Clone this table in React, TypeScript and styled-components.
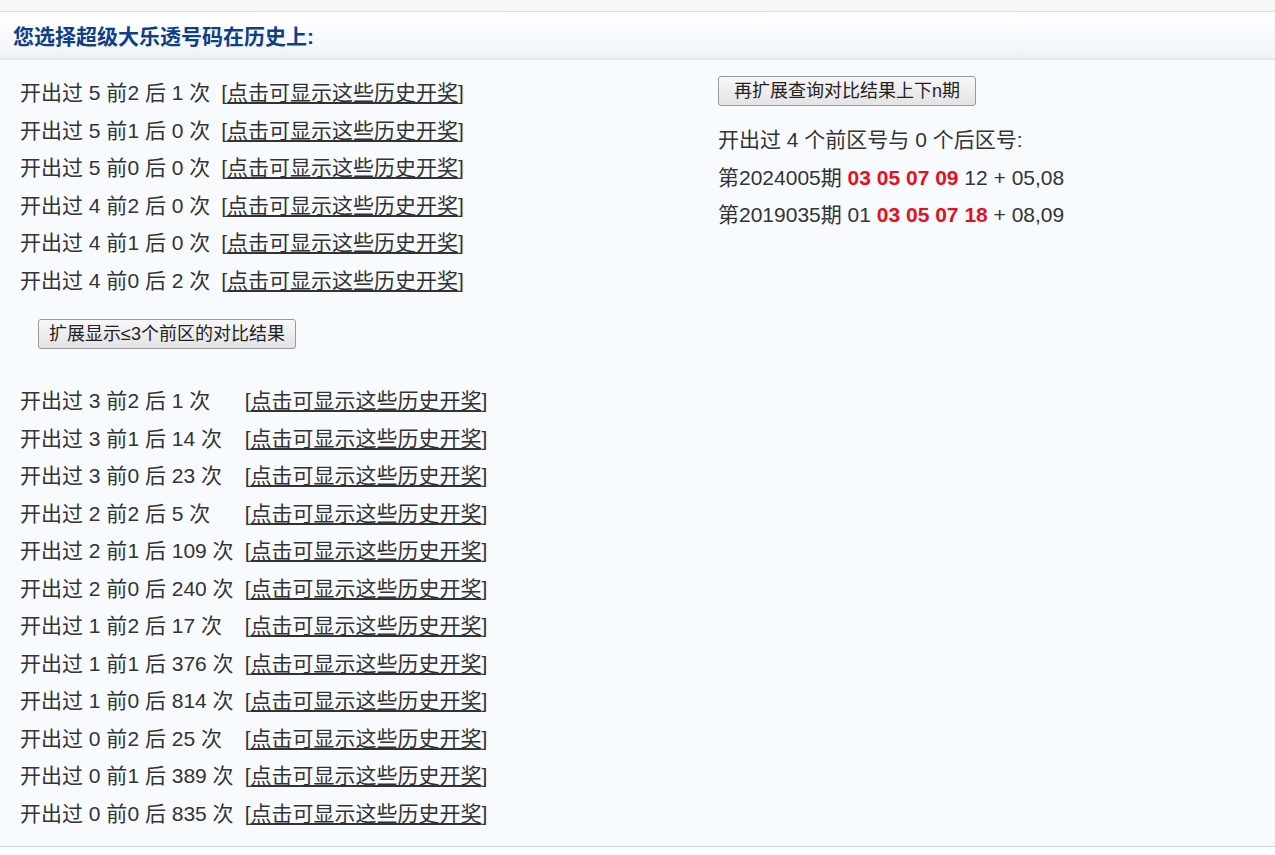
import React from "react";
import styled, { createGlobalStyle } from "styled-components";

const Global = createGlobalStyle`
  html, body { margin: 0; padding: 0; background: #ffffff; }
  body { font-family: "Liberation Sans", "Noto Sans CJK SC", sans-serif; color: #333; }
`;

const Page = styled.div`
  width: 1275px;
  height: 855px;
  display: flex;
  flex-direction: column;
  background: #ffffff;
`;

const TopStrip = styled.div`
  height: 11px;
  background: #f6f7f6;
  border-bottom: 1px solid #dcdedf;
`;

const Header = styled.div`
  height: 46px;
  display: flex;
  align-items: center;
  padding-left: 13px;
  background: linear-gradient(#ffffff 0%, #f5f8fd 70%, #eef2f7 100%);
  border-bottom: 2px solid #e3e8ee;
`;

const Title = styled.h2`
  margin: 0;
  font-size: 21px;
  font-weight: bold;
  color: #0e3f88;
  font-family: "Liberation Sans", "Noto Sans CJK SC", sans-serif;
`;

const Content = styled.div`
  height: 786px;
  background: #f8fbfe;
  border-bottom: 1px solid #c9d9e2;
  display: grid;
  grid-template-columns: 718px 1fr;
`;

const LeftCol = styled.div`
  padding: 14px 0 0 20px;
  display: flex;
  flex-direction: column;
  align-items: flex-start;
`;

const RightCol = styled.div`
  padding-top: 16px;
  display: flex;
  flex-direction: column;
  align-items: flex-start;
`;

const Table = styled.table`
  border-collapse: collapse;
  font-size: 21px;
  color: #333;
`;

const Cell = styled.td`
  padding: 0 11px 0 0;
  height: 37.5px;
  line-height: 37.5px;
  white-space: nowrap;
`;

const LinkWrap = styled.span`
  color: #333;
`;

const Link = styled.a`
  color: #333;
  text-decoration: underline;
  text-underline-offset: 2px;
  cursor: pointer;
`;

const Button = styled.button<{ $ml?: number; $px: number }>`
  margin-left: ${(p) => p.$ml ?? 0}px;
  height: 30px;
  padding: 0 ${(p) => p.$px}px;
  font-size: 18px;
  font-family: "Liberation Sans", "Noto Sans CJK SC", sans-serif;
  color: #222;
  background: linear-gradient(#f8f8f8, #e3e3e3);
  border: 1px solid #9a9a9a;
  border-radius: 3px;
  line-height: 28px;
`;

const ButtonRow = styled.div`
  padding: 20px 0 33px 0;
  display: flex;
`;

const Line = styled.div`
  font-size: 21px;
  line-height: 37.5px;
  color: #333;
  white-space: nowrap;
`;

const Red = styled.b`
  color: #e8101a;
`;

const Spacer = styled.div`
  height: 15px;
`;

const group1 = [
  ["5", "2", "1"],
  ["5", "1", "0"],
  ["5", "0", "0"],
  ["4", "2", "0"],
  ["4", "1", "0"],
  ["4", "0", "2"],
];

const group2 = [
  ["3", "2", "1"],
  ["3", "1", "14"],
  ["3", "0", "23"],
  ["2", "2", "5"],
  ["2", "1", "109"],
  ["2", "0", "240"],
  ["1", "2", "17"],
  ["1", "1", "376"],
  ["1", "0", "814"],
  ["0", "2", "25"],
  ["0", "1", "389"],
  ["0", "0", "835"],
];

function Rows({ data }: { data: string[][] }) {
  return (
    <Table>
      <tbody>
        {data.map((r, i) => (
          <tr key={i}>
            <Cell>
              开出过 {r[0]} 前{r[1]} 后 {r[2]} 次
            </Cell>
            <Cell>
              <LinkWrap>
                [<Link>点击可显示这些历史开奖</Link>]
              </LinkWrap>
            </Cell>
          </tr>
        ))}
      </tbody>
    </Table>
  );
}

export default function App() {
  return (
    <Page>
      <Global />
      <TopStrip />
      <Header>
        <Title>您选择超级大乐透号码在历史上:</Title>
      </Header>
      <Content>
        <LeftCol>
          <Rows data={group1} />
          <ButtonRow>
            <Button $ml={18} $px={10}>扩展显示≤3个前区的对比结果</Button>
          </ButtonRow>
          <Rows data={group2} />
        </LeftCol>
        <RightCol>
          <Button $px={15}>再扩展查询对比结果上下n期</Button>
          <Spacer />
          <Line>开出过 4 个前区号与 0 个后区号:</Line>
          <Line>
            第2024005期 <Red>03 05 07 09</Red> 12 + 05,08
          </Line>
          <Line>
            第2019035期 01 <Red>03 05 07 18</Red> + 08,09
          </Line>
        </RightCol>
      </Content>
    </Page>
  );
}
